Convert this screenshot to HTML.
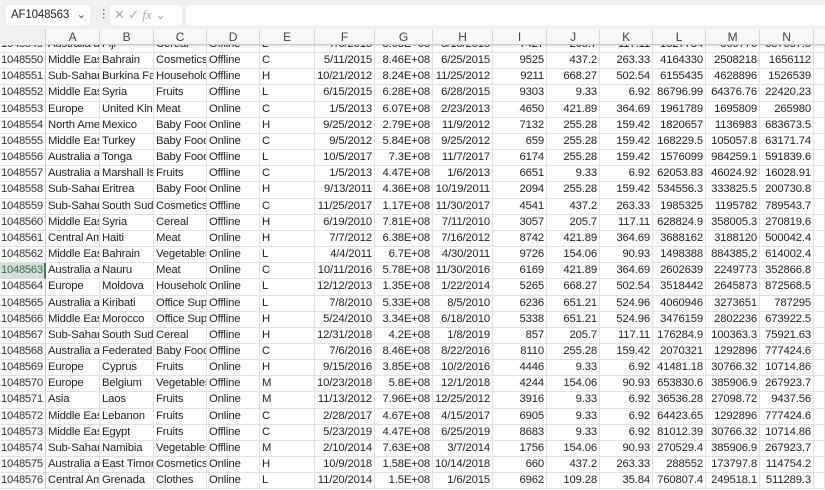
<!DOCTYPE html>
<html><head><meta charset="utf-8"><style>
*{margin:0;padding:0;box-sizing:border-box}
body{width:825px;height:490px;overflow:hidden;background:#fff;font-family:"Liberation Sans",sans-serif;font-size:11.3px;letter-spacing:-0.15px;color:#222;position:relative}
#tb{position:absolute;left:0;top:0;width:825px;height:29px;background:#f0f0f0}
#nb{position:absolute;left:6px;top:5px;width:84px;height:20px;background:#fff;border-radius:4px;font-size:11.5px;line-height:20px;padding-left:5px}
#fx{position:absolute;left:110px;top:5px;width:72px;height:20px;background:#fff;border-radius:4px;color:#aaa;font-size:13px;line-height:20px;padding-left:4px}
#fb{position:absolute;left:186px;top:5px;width:640px;height:20px;background:#fff;border-radius:4px 0 0 4px}
#hdr{position:absolute;left:0;top:29px;height:16px;width:825px;background:#f7f7f7;border-bottom:1px solid #c8c8c8;box-shadow:0 1px 2px rgba(0,0,0,.15);z-index:2;display:grid;grid-template-columns:46px 54px 54px 53px 53px 55px 60px 58px 60px 54px 53px 53px 53px 54px 54px 1fr}
#hdr div{text-align:center;border-right:1px solid #d8d8d8;line-height:16px;color:#444;font-size:12px}
#g{position:absolute;left:0;top:37px;width:825px;display:grid;grid-template-columns:46px 54px 54px 53px 53px 55px 60px 58px 60px 54px 53px 53px 53px 54px 54px 1fr;grid-auto-rows:16.16px}
#g div{border-right:1px solid #e1e1e1;border-bottom:1px solid #e1e1e1;white-space:nowrap;overflow:hidden;padding:0 2px;line-height:15px}
#g .r{text-align:right}
#g .h{padding-left:1px;color:#333;border-right:1px solid #ccc;letter-spacing:-0.3px}
#g .s{background:#d5ddd8;color:#3b6b4f;border-right:2px solid #3b7a52}
</style></head><body>
<div id="tb"><div id="nb">AF1048563 <span style="float:right;margin-right:4px;color:#555">⌄</span></div><span style="position:absolute;left:98px;top:7px;color:#555">⋮</span><div id="fx">✕ ✓ <i style="font-family:'Liberation Serif'">fx</i> ⌄</div><div id="fb"></div></div>
<div id="hdr"><div style="background:#f0f0f0"></div><div>A</div><div>B</div><div>C</div><div>D</div><div>E</div><div>F</div><div>G</div><div>H</div><div>I</div><div>J</div><div>K</div><div>L</div><div>M</div><div>N</div><div style="border:0"></div></div>
<div id="g">
<div class="h">1048549</div><div>Australia a</div><div>Fiji</div><div>Cereal</div><div>Offline</div><div>L</div><div class="r">7/6/2015</div><div class="r">8.63E+08</div><div class="r">8/18/2015</div><div class="r">7427</div><div class="r">205.7</div><div class="r">117.11</div><div class="r">1527734</div><div class="r">869776</div><div class="r">657957.5</div><div></div>
<div class="h">1048550</div><div>Middle Eas</div><div>Bahrain</div><div>Cosmetics</div><div>Offline</div><div>C</div><div class="r">5/11/2015</div><div class="r">8.46E+08</div><div class="r">6/25/2015</div><div class="r">9525</div><div class="r">437.2</div><div class="r">263.33</div><div class="r">4164330</div><div class="r">2508218</div><div class="r">1656112</div><div></div>
<div class="h">1048551</div><div>Sub-Sahar</div><div>Burkina Fa</div><div>Household</div><div>Offline</div><div>H</div><div class="r">10/21/2012</div><div class="r">8.24E+08</div><div class="r">11/25/2012</div><div class="r">9211</div><div class="r">668.27</div><div class="r">502.54</div><div class="r">6155435</div><div class="r">4628896</div><div class="r">1526539</div><div></div>
<div class="h">1048552</div><div>Middle Eas</div><div>Syria</div><div>Fruits</div><div>Offline</div><div>L</div><div class="r">6/15/2015</div><div class="r">6.28E+08</div><div class="r">6/28/2015</div><div class="r">9303</div><div class="r">9.33</div><div class="r">6.92</div><div class="r">86796.99</div><div class="r">64376.76</div><div class="r">22420.23</div><div></div>
<div class="h">1048553</div><div>Europe</div><div>United King</div><div>Meat</div><div>Online</div><div>C</div><div class="r">1/5/2013</div><div class="r">6.07E+08</div><div class="r">2/23/2013</div><div class="r">4650</div><div class="r">421.89</div><div class="r">364.69</div><div class="r">1961789</div><div class="r">1695809</div><div class="r">265980</div><div></div>
<div class="h">1048554</div><div>North Ame</div><div>Mexico</div><div>Baby Food</div><div>Online</div><div>H</div><div class="r">9/25/2012</div><div class="r">2.79E+08</div><div class="r">11/9/2012</div><div class="r">7132</div><div class="r">255.28</div><div class="r">159.42</div><div class="r">1820657</div><div class="r">1136983</div><div class="r">683673.5</div><div></div>
<div class="h">1048555</div><div>Middle Eas</div><div>Turkey</div><div>Baby Food</div><div>Online</div><div>C</div><div class="r">9/5/2012</div><div class="r">5.84E+08</div><div class="r">9/25/2012</div><div class="r">659</div><div class="r">255.28</div><div class="r">159.42</div><div class="r">168229.5</div><div class="r">105057.8</div><div class="r">63171.74</div><div></div>
<div class="h">1048556</div><div>Australia a</div><div>Tonga</div><div>Baby Food</div><div>Offline</div><div>L</div><div class="r">10/5/2017</div><div class="r">7.3E+08</div><div class="r">11/7/2017</div><div class="r">6174</div><div class="r">255.28</div><div class="r">159.42</div><div class="r">1576099</div><div class="r">984259.1</div><div class="r">591839.6</div><div></div>
<div class="h">1048557</div><div>Australia a</div><div>Marshall Is</div><div>Fruits</div><div>Offline</div><div>C</div><div class="r">1/5/2013</div><div class="r">4.47E+08</div><div class="r">1/6/2013</div><div class="r">6651</div><div class="r">9.33</div><div class="r">6.92</div><div class="r">62053.83</div><div class="r">46024.92</div><div class="r">16028.91</div><div></div>
<div class="h">1048558</div><div>Sub-Sahar</div><div>Eritrea</div><div>Baby Food</div><div>Online</div><div>H</div><div class="r">9/13/2011</div><div class="r">4.36E+08</div><div class="r">10/19/2011</div><div class="r">2094</div><div class="r">255.28</div><div class="r">159.42</div><div class="r">534556.3</div><div class="r">333825.5</div><div class="r">200730.8</div><div></div>
<div class="h">1048559</div><div>Sub-Sahar</div><div>South Suda</div><div>Cosmetics</div><div>Offline</div><div>C</div><div class="r">11/25/2017</div><div class="r">1.17E+08</div><div class="r">11/30/2017</div><div class="r">4541</div><div class="r">437.2</div><div class="r">263.33</div><div class="r">1985325</div><div class="r">1195782</div><div class="r">789543.7</div><div></div>
<div class="h">1048560</div><div>Middle Eas</div><div>Syria</div><div>Cereal</div><div>Offline</div><div>H</div><div class="r">6/19/2010</div><div class="r">7.81E+08</div><div class="r">7/11/2010</div><div class="r">3057</div><div class="r">205.7</div><div class="r">117.11</div><div class="r">628824.9</div><div class="r">358005.3</div><div class="r">270819.6</div><div></div>
<div class="h">1048561</div><div>Central Am</div><div>Haiti</div><div>Meat</div><div>Online</div><div>H</div><div class="r">7/7/2012</div><div class="r">6.38E+08</div><div class="r">7/16/2012</div><div class="r">8742</div><div class="r">421.89</div><div class="r">364.69</div><div class="r">3688162</div><div class="r">3188120</div><div class="r">500042.4</div><div></div>
<div class="h">1048562</div><div>Middle Eas</div><div>Bahrain</div><div>Vegetables</div><div>Online</div><div>L</div><div class="r">4/4/2011</div><div class="r">6.7E+08</div><div class="r">4/30/2011</div><div class="r">9726</div><div class="r">154.06</div><div class="r">90.93</div><div class="r">1498388</div><div class="r">884385.2</div><div class="r">614002.4</div><div></div>
<div class="h s">1048563</div><div>Australia a</div><div>Nauru</div><div>Meat</div><div>Online</div><div>C</div><div class="r">10/11/2016</div><div class="r">5.78E+08</div><div class="r">11/30/2016</div><div class="r">6169</div><div class="r">421.89</div><div class="r">364.69</div><div class="r">2602639</div><div class="r">2249773</div><div class="r">352866.8</div><div></div>
<div class="h">1048564</div><div>Europe</div><div>Moldova</div><div>Household</div><div>Online</div><div>L</div><div class="r">12/12/2013</div><div class="r">1.35E+08</div><div class="r">1/22/2014</div><div class="r">5265</div><div class="r">668.27</div><div class="r">502.54</div><div class="r">3518442</div><div class="r">2645873</div><div class="r">872568.5</div><div></div>
<div class="h">1048565</div><div>Australia a</div><div>Kiribati</div><div>Office Sup</div><div>Offline</div><div>L</div><div class="r">7/8/2010</div><div class="r">5.33E+08</div><div class="r">8/5/2010</div><div class="r">6236</div><div class="r">651.21</div><div class="r">524.96</div><div class="r">4060946</div><div class="r">3273651</div><div class="r">787295</div><div></div>
<div class="h">1048566</div><div>Middle Eas</div><div>Morocco</div><div>Office Sup</div><div>Offline</div><div>H</div><div class="r">5/24/2010</div><div class="r">3.34E+08</div><div class="r">6/18/2010</div><div class="r">5338</div><div class="r">651.21</div><div class="r">524.96</div><div class="r">3476159</div><div class="r">2802236</div><div class="r">673922.5</div><div></div>
<div class="h">1048567</div><div>Sub-Sahar</div><div>South Suda</div><div>Cereal</div><div>Offline</div><div>H</div><div class="r">12/31/2018</div><div class="r">4.2E+08</div><div class="r">1/8/2019</div><div class="r">857</div><div class="r">205.7</div><div class="r">117.11</div><div class="r">176284.9</div><div class="r">100363.3</div><div class="r">75921.63</div><div></div>
<div class="h">1048568</div><div>Australia a</div><div>Federated</div><div>Baby Food</div><div>Offline</div><div>C</div><div class="r">7/6/2016</div><div class="r">8.46E+08</div><div class="r">8/22/2016</div><div class="r">8110</div><div class="r">255.28</div><div class="r">159.42</div><div class="r">2070321</div><div class="r">1292896</div><div class="r">777424.6</div><div></div>
<div class="h">1048569</div><div>Europe</div><div>Cyprus</div><div>Fruits</div><div>Online</div><div>H</div><div class="r">9/15/2016</div><div class="r">3.85E+08</div><div class="r">10/2/2016</div><div class="r">4446</div><div class="r">9.33</div><div class="r">6.92</div><div class="r">41481.18</div><div class="r">30766.32</div><div class="r">10714.86</div><div></div>
<div class="h">1048570</div><div>Europe</div><div>Belgium</div><div>Vegetables</div><div>Offline</div><div>M</div><div class="r">10/23/2018</div><div class="r">5.8E+08</div><div class="r">12/1/2018</div><div class="r">4244</div><div class="r">154.06</div><div class="r">90.93</div><div class="r">653830.6</div><div class="r">385906.9</div><div class="r">267923.7</div><div></div>
<div class="h">1048571</div><div>Asia</div><div>Laos</div><div>Fruits</div><div>Online</div><div>M</div><div class="r">11/13/2012</div><div class="r">7.96E+08</div><div class="r">12/25/2012</div><div class="r">3916</div><div class="r">9.33</div><div class="r">6.92</div><div class="r">36536.28</div><div class="r">27098.72</div><div class="r">9437.56</div><div></div>
<div class="h">1048572</div><div>Middle Eas</div><div>Lebanon</div><div>Fruits</div><div>Online</div><div>C</div><div class="r">2/28/2017</div><div class="r">4.67E+08</div><div class="r">4/15/2017</div><div class="r">6905</div><div class="r">9.33</div><div class="r">6.92</div><div class="r">64423.65</div><div class="r">1292896</div><div class="r">777424.6</div><div></div>
<div class="h">1048573</div><div>Middle Eas</div><div>Egypt</div><div>Fruits</div><div>Offline</div><div>C</div><div class="r">5/23/2019</div><div class="r">4.47E+08</div><div class="r">6/25/2019</div><div class="r">8683</div><div class="r">9.33</div><div class="r">6.92</div><div class="r">81012.39</div><div class="r">30766.32</div><div class="r">10714.86</div><div></div>
<div class="h">1048574</div><div>Sub-Sahar</div><div>Namibia</div><div>Vegetables</div><div>Offline</div><div>M</div><div class="r">2/10/2014</div><div class="r">7.63E+08</div><div class="r">3/7/2014</div><div class="r">1756</div><div class="r">154.06</div><div class="r">90.93</div><div class="r">270529.4</div><div class="r">385906.9</div><div class="r">267923.7</div><div></div>
<div class="h">1048575</div><div>Australia a</div><div>East Timor</div><div>Cosmetics</div><div>Online</div><div>H</div><div class="r">10/9/2018</div><div class="r">1.58E+08</div><div class="r">10/14/2018</div><div class="r">660</div><div class="r">437.2</div><div class="r">263.33</div><div class="r">288552</div><div class="r">173797.8</div><div class="r">114754.2</div><div></div>
<div class="h">1048576</div><div>Central Am</div><div>Grenada</div><div>Clothes</div><div>Online</div><div>L</div><div class="r">11/20/2014</div><div class="r">1.5E+08</div><div class="r">1/6/2015</div><div class="r">6962</div><div class="r">109.28</div><div class="r">35.84</div><div class="r">760807.4</div><div class="r">249518.1</div><div class="r">511289.3</div><div></div>
</div>
</body></html>
